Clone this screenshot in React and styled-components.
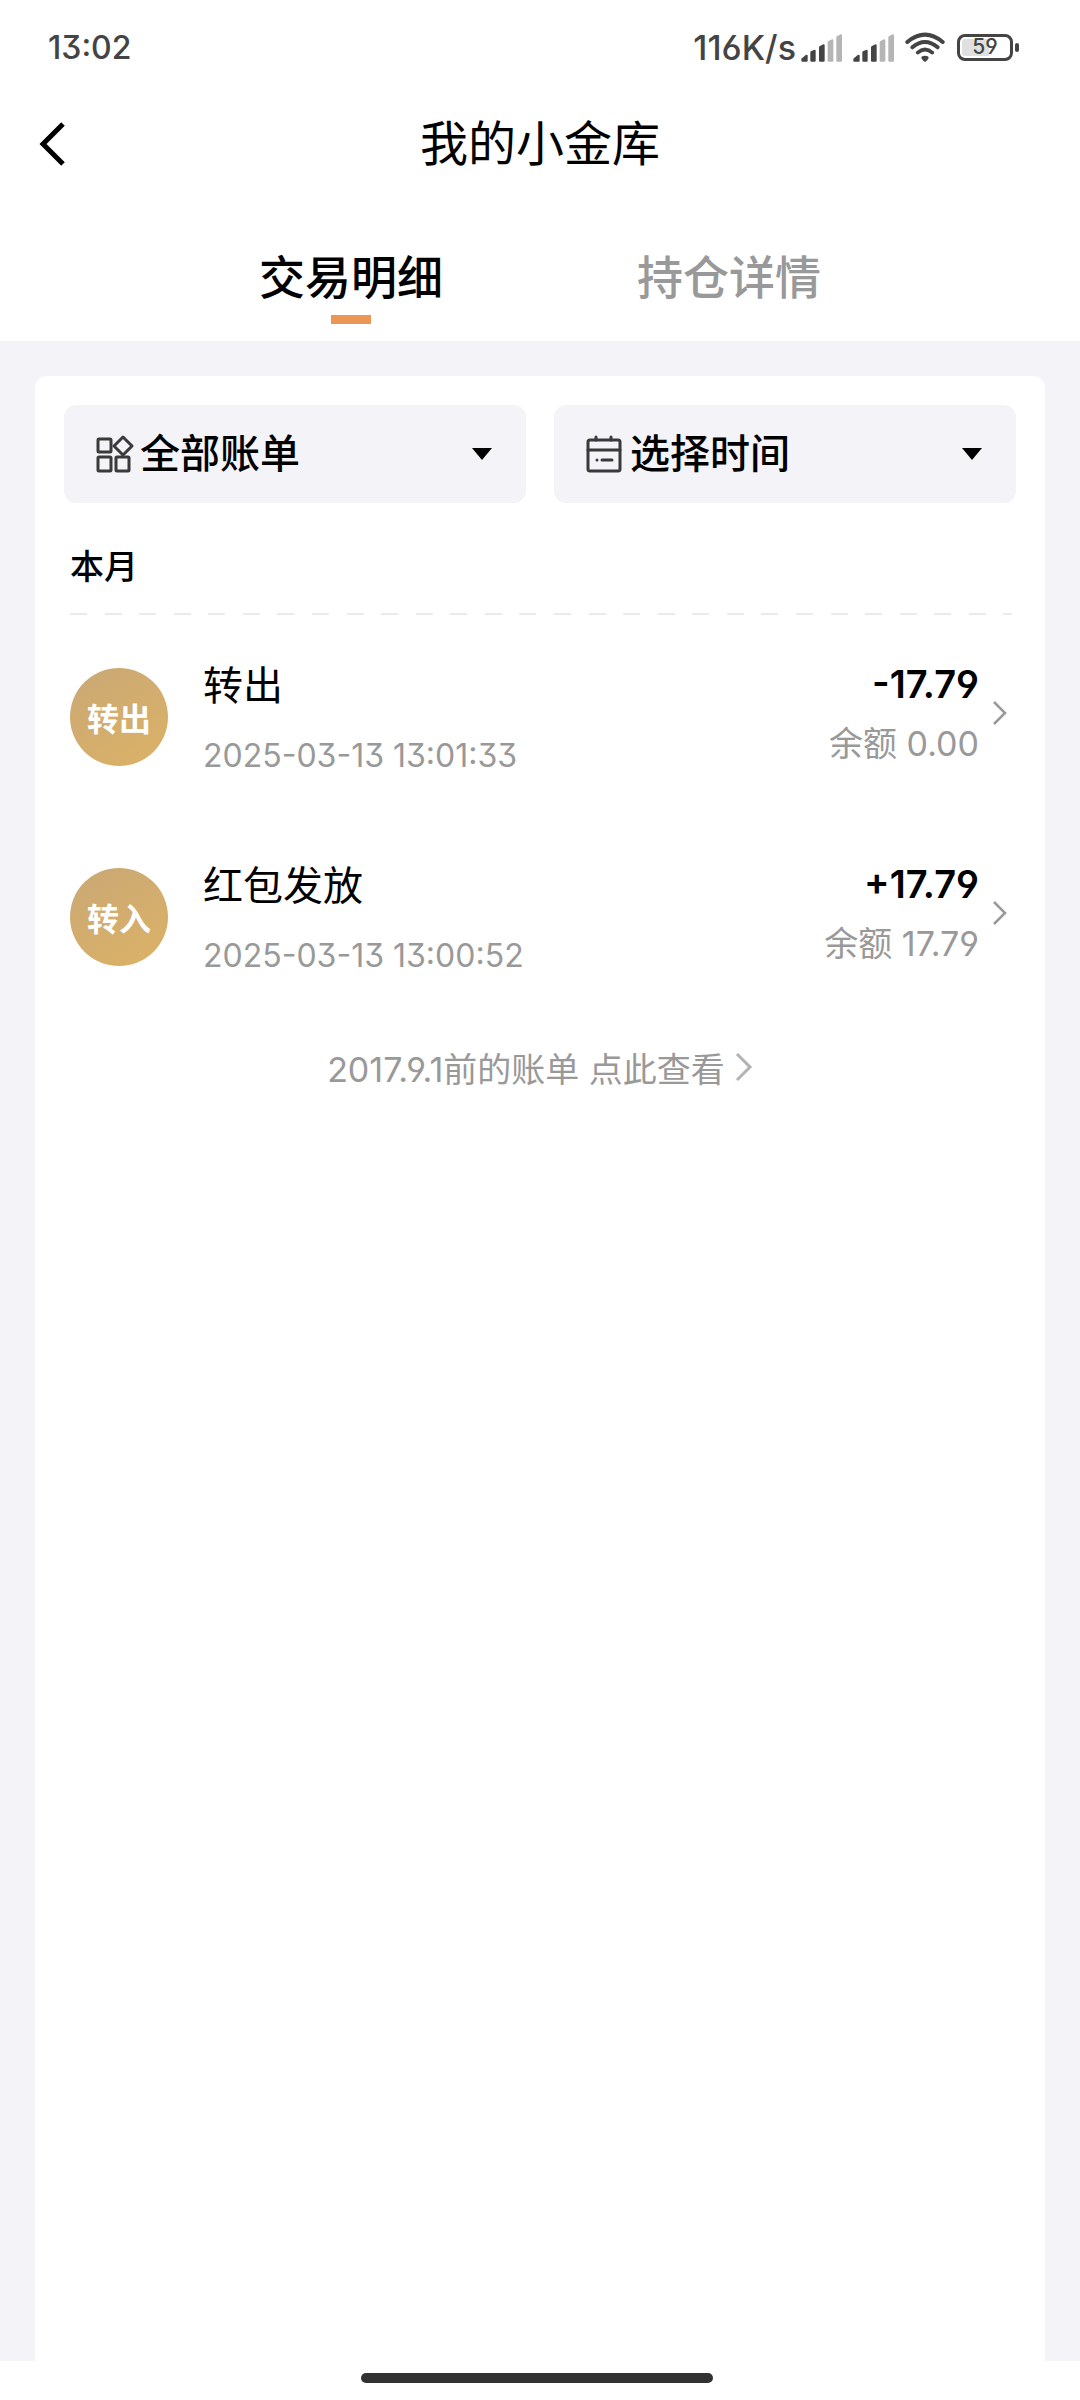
import React, { useState } from "react";
import styled, { createGlobalStyle } from "styled-components";

const records = [
  {
    id: 1,
    badge: "转出",
    title: "转出",
    time: "2025-03-13 13:01:33",
    amount: "-17.79",
    balance: "0.00",
  },
  {
    id: 2,
    badge: "转入",
    title: "红包发放",
    time: "2025-03-13 13:00:52",
    amount: "+17.79",
    balance: "17.79",
  },
];

const tabs = ["交易明细", "持仓详情"];

function SignalIcon() {
  return (
    <svg width="42" height="30" viewBox="0 0 126 90" aria-hidden="true">
      <path fill="#444" d="M1 80l13-11q6-2 6 3v14q0 3-3 3H4q-3 0-3-3z" />
      <path fill="#444" d="M28 61q0-3 3-4l10-4q3 0 3 3v30q0 3-3 3H31q-3 0-3-3z" />
      <path fill="#444" d="M54 46q0-3 3-4l10-5q4 0 4 3v46q0 3-3 3H57q-3 0-3-3z" />
      <path fill="#b5b5b5" d="M80 31q0-3 3-4l10-5q4 0 4 3v61q0 3-3 3H83q-3 0-3-3z" />
      <path fill="#b5b5b5" d="M106 16q0-3 3-4l10-5q4 0 4 3v76q0 3-3 3h-11q-3 0-3-3z" />
    </svg>
  );
}

function WifiIcon() {
  return (
    <svg width="40" height="30" viewBox="0 0 120 90" fill="none" stroke="#444" strokeLinecap="round" aria-hidden="true">
      <path strokeWidth="12" d="M7 30Q60-14 113 30" />
      <path strokeWidth="12" d="M22 46Q60 14 98 46" />
      <path strokeWidth="11" d="M38 62Q60 43 82 62" />
      <path fill="#444" stroke="none" d="M49 77q0-6 11-6t11 6q0 4-11 13q-11-9-11-13z" />
    </svg>
  );
}

function BackIcon() {
  return (
    <svg width="28" height="46" viewBox="0 0 28 46" fill="none" stroke="#000" strokeWidth="5" aria-hidden="true">
      <path d="M25 3L5 23l20 20" />
    </svg>
  );
}

function GridIcon() {
  return (
    <svg width="38" height="38" viewBox="0 0 38 38" fill="none" stroke="#3a3a3a" strokeWidth="3" strokeLinejoin="round" aria-hidden="true">
      <rect x="2" y="4" width="13" height="13" rx="1" />
      <rect x="2" y="22" width="13" height="14" rx="1" />
      <rect x="20" y="22" width="13" height="14" rx="1" />
      <path d="M27 2l9 9-9 9-9-9z" />
    </svg>
  );
}

function CalendarIcon() {
  return (
    <svg width="38" height="38" viewBox="0 0 38 38" fill="none" stroke="#3a3a3a" strokeWidth="3" strokeLinecap="round" aria-hidden="true">
      <rect x="2" y="5" width="32" height="31" rx="2" />
      <path d="M2 15h32M10 2v3M25 2v3M11 25h0M16 25h10" />
    </svg>
  );
}

function CaretIcon() {
  return (
    <svg width="20" height="12" viewBox="0 0 20 12" aria-hidden="true">
      <path d="M0 0h20L10 12z" />
    </svg>
  );
}

function App() {
  const [active, setActive] = useState(0);

  return (
    <Page>
      <GlobalStyle />
      <StatusBar>
        <Clock>13:02</Clock>
        <StatusIcons>
          <span>116K/s</span>
          <SignalIcon />
          <SignalIcon />
          <WifiIcon />
          <Battery>
            <span>59</span>
          </Battery>
        </StatusIcons>
      </StatusBar>

      <TitleBar>
        <BackButton aria-label="返回">
          <BackIcon />
        </BackButton>
        <h1>我的小金库</h1>
      </TitleBar>

      <TabList role="tablist">
        {tabs.map((tab, i) => (
          <Tab key={tab} role="tab" aria-selected={active === i} $active={active === i} onClick={() => setActive(i)}>
            {tab}
          </Tab>
        ))}
      </TabList>

      <Content>
        <Card>
          <Filters>
            <FilterBox>
              <GridIcon />
              <select aria-label="账单类型">
                <option>全部账单</option>
              </select>
              <CaretIcon />
            </FilterBox>
            <FilterBox>
              <CalendarIcon />
              <select aria-label="时间">
                <option>选择时间</option>
              </select>
              <CaretIcon />
            </FilterBox>
          </Filters>

          <MonthTitle>本月</MonthTitle>

          <RecordList>
            {records.map((item) => (
              <li key={item.id}>
                <RecordLink href="#">
                  <Badge>{item.badge}</Badge>
                  <RecordInfo>
                    <RecordTitle>{item.title}</RecordTitle>
                    <RecordTime>{item.time}</RecordTime>
                  </RecordInfo>
                  <RecordMoney>
                    <Amount>{item.amount}</Amount>
                    <Balance>余额 {item.balance}</Balance>
                  </RecordMoney>
                  <svg width="14" height="24" viewBox="0 0 14 24" fill="none" stroke="#999" strokeWidth="2.5" aria-hidden="true">
                    <path d="M1 1l11 11L1 23" />
                  </svg>
                </RecordLink>
              </li>
            ))}
          </RecordList>

          <HistoryLink href="#">
            2017.9.1前的账单 点此查看
            <svg width="18" height="30" viewBox="0 0 18 30" fill="none" stroke="#b3b3b3" strokeWidth="3" aria-hidden="true">
              <path d="M2 2l13 13L2 28" />
            </svg>
          </HistoryLink>
        </Card>
      </Content>

      <HomeBar>
        <span />
      </HomeBar>
    </Page>
  );
}

const GlobalStyle = createGlobalStyle`
  * {
    box-sizing: border-box;
    margin: 0;
    padding: 0;
  }
  body {
    background: #fff;
    color: #000;
    font-family: Inter, "Noto Sans CJK SC", sans-serif;
    font-feature-settings: "ss01", "cv09";
  }
  button, select {
    border: 0;
    background: none;
    color: inherit;
    font: inherit;
    font-feature-settings: inherit;
  }
  a {
    color: inherit;
    text-decoration: none;
  }
  svg {
    display: block;
    flex: none;
  }
`;

const Page = styled.div`
  display: flex;
  flex-direction: column;
  min-height: 100vh;
`;

const StatusBar = styled.div`
  display: flex;
  align-items: center;
  justify-content: space-between;
  height: 94px;
  padding: 0 61px 0 48px;
  font-size: 34px;
  font-weight: 500;
  color: #444;
`;

const Clock = styled.span`
  font-size: 32px;
`;

const StatusIcons = styled.div`
  display: flex;
  align-items: center;
  gap: 10px;
  > span {
    margin-right: -5px;
  }
`;

const Battery = styled.div`
  position: relative;
  display: flex;
  align-items: center;
  justify-content: center;
  width: 56px;
  height: 27px;
  margin: 0 6px 0 2px;
  border: 3px solid #444;
  border-radius: 8px;
  background: linear-gradient(to right, #e0e0e0 59%, transparent 59%) content-box;
  padding: 2px;
  font-size: 21px;
  line-height: 20px;
  &::after {
    content: "";
    position: absolute;
    right: -9px;
    top: 6px;
    width: 4px;
    height: 9px;
    border-radius: 2px;
    background: #444;
  }
`;

const TitleBar = styled.header`
  position: relative;
  display: flex;
  align-items: center;
  justify-content: center;
  height: 98px;
  padding-bottom: 6px;
  h1 {
    font-size: 48px;
    font-weight: 400;
  }
`;

const BackButton = styled.button`
  position: absolute;
  left: 38px;
  top: 27px;
`;

const TabList = styled.div`
  display: flex;
  justify-content: center;
  gap: 194px;
  padding: 54px 0 17px;
`;

const Tab = styled.button`
  display: flex;
  flex-direction: column;
  align-items: center;
  gap: 6px;
  font-size: 46px;
  font-weight: 500;
  line-height: 63px;
  color: ${(props) => (props.$active ? "#000" : "#999")};
  &::after {
    content: "";
    width: 40px;
    height: 9px;
    background: ${(props) => (props.$active ? "#ea9654" : "transparent")};
  }
`;

const Content = styled.main`
  display: flex;
  flex: 1;
  padding: 35px 35px 0;
  background: #f3f3f8;
`;

const Card = styled.section`
  flex: 1;
  padding: 29px;
  border-radius: 12px 12px 0 0;
  background: #fff;
`;

const Filters = styled.div`
  display: grid;
  grid-template-columns: 1fr 1fr;
  gap: 28px;
`;

const FilterBox = styled.label`
  display: flex;
  align-items: center;
  height: 98px;
  padding: 0 34px 0 32px;
  border-radius: 12px;
  background: #f3f3f8;
  select {
    flex: 1;
    min-width: 0;
    padding-left: 6px;
    appearance: none;
    outline: none;
    font-size: 40px;
    font-weight: 500;
    line-height: 56px;
  }
`;

const MonthTitle = styled.h2`
  margin: 0 4px 0 6px;
  padding: 40px 0 22px;
  font-size: 34px;
  font-weight: 500;
  line-height: 48px;
  border-bottom: 2px solid transparent;
  background: repeating-linear-gradient(to right, #ebebeb 0 1.8%, transparent 1.8% 3.67%) bottom / 100% 2px no-repeat border-box;
`;

const RecordList = styled.ul`
  padding-top: 2px;
  list-style: none;
`;

const RecordLink = styled.a`
  display: flex;
  align-items: center;
  height: 200px;
  padding: 0 9px 0 6px;
  svg {
    margin-bottom: 8px;
  }
`;

const Badge = styled.span`
  display: flex;
  align-items: center;
  justify-content: center;
  width: 98px;
  height: 98px;
  margin-right: 35px;
  border-radius: 50%;
  background: linear-gradient(150deg, #c9a875, #dcb266);
  color: #fff;
  font-size: 32px;
  font-weight: 700;
`;

const RecordInfo = styled.div`
  display: flex;
  flex: 1;
  flex-direction: column;
  gap: 18px;
  padding-top: 3px;
`;

const RecordTitle = styled.p`
  font-size: 40px;
  line-height: 56px;
`;

const RecordTime = styled.p`
  font-size: 32px;
  line-height: 48px;
  color: #999;
`;

const RecordMoney = styled.div`
  display: flex;
  flex-direction: column;
  align-items: flex-end;
  gap: 12px;
  margin-right: 14px;
  padding-bottom: 6px;
`;

const Amount = styled.p`
  font-size: 38px;
  font-weight: 600;
  line-height: 48px;
`;

const Balance = styled.p`
  font-size: 34px;
  line-height: 48px;
  color: #999;
`;

const HistoryLink = styled.a`
  display: flex;
  align-items: center;
  justify-content: center;
  gap: 10px;
  height: 100px;
  font-size: 34px;
  color: #999;
`;

const HomeBar = styled.footer`
  display: flex;
  justify-content: center;
  height: 39px;
  padding: 12px 6px 0 0;
  span {
    width: 352px;
    height: 10px;
    border-radius: 5px;
    background: #323232;
  }
`;

export default App;
